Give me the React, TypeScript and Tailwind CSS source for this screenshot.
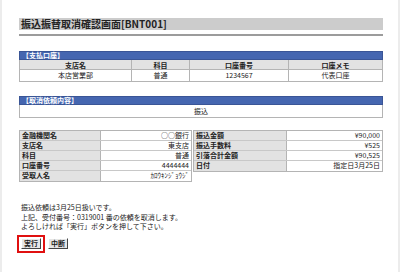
const jp = { fontFamily: '"Noto Sans CJK JP", "Noto Sans", sans-serif' };

const payAccount = { branch: "本店営業部", kind: "普通", number: "1234567", memo: "代表口座" };

const leftRows: [string, string][] = [
  ["金融機関名", "○○銀行"],
  ["支店名", "東支店"],
  ["科目", "普通"],
  ["口座番号", "4444444"],
  ["受取人名", "ｶﾛｳｷﾝｼﾞｮｳｼﾞ"],
];

const rightRows: [string, string][] = [
  ["振込金額", "¥90,000"],
  ["振込手数料", "¥525"],
  ["引落合計金額", "¥90,525"],
  ["日付", "指定日3月25日"],
];

function SectionBar({ title }: { title: string }) {
  return (
    <div className="h-[9px] bg-[#4566b0] border border-[#3a5596] text-white font-bold text-[7px] leading-[7px] pl-[2px]">
      {title}
    </div>
  );
}

function KeyValueTable({ rows, labelW }: { rows: [string, string][]; labelW: string }) {
  return (
    <div className="flex flex-col border border-[#b4b4b4] bg-white">
      {rows.map(([k, v]) => (
        <div key={k} className="flex h-[10px] border-b border-[#c8c8c8] last:border-b-0 text-[7px] leading-[9px]">
          <div className={`${labelW} bg-[#e2e2e2] border-r border-[#b4b4b4] font-bold pl-[2px]`}>{k}</div>
          <div className="flex-1 text-right pr-[2px]">{v}</div>
        </div>
      ))}
    </div>
  );
}

function OldButton({ label }: { label: string }) {
  return (
    <button className="flex items-center justify-center w-[20px] h-[11px] p-0 bg-[#e6e6e6] border border-t-white border-l-white border-r-[#444] border-b-[#444] text-[7px] leading-none font-bold">
      {label}
    </button>
  );
}

export default function App() {
  return (
    <div className="w-[400px] h-[272px] bg-white border-x-2 border-[#ececec] text-[#222]" style={jp}>
      <div className="pt-[18px] pl-[17px] w-[381px]">
        <div className="h-[12px] bg-[#cccccc] font-bold text-[10px] leading-[12px] pl-[2px]">振込振替取消確認画面[BNT001]</div>
        <div className="mt-[4px] h-[2px] bg-[#9c9c9c]" />

        <div className="mt-[15px]">
          <SectionBar title="【支払口座】" />
          <div className="grid grid-cols-[112px_58px_99px_1fr] border border-t-0 border-[#b4b4b4] text-[7px]">
            {["支店名", "科目", "口座番号", "口座メモ"].map((h, i) => (
              <div key={h} className={`h-[10px] leading-[10px] bg-[#e2e2e2] font-bold text-center border-b border-[#b4b4b4] ${i < 3 ? "border-r" : ""}`}>{h}</div>
            ))}
            {[payAccount.branch, payAccount.kind, payAccount.number, payAccount.memo].map((v, i) => (
              <div key={i} className={`h-[11px] leading-[11px] text-center border-[#b4b4b4] ${i < 3 ? "border-r" : ""}`}>{v}</div>
            ))}
          </div>
        </div>

        <div className="mt-[14px]">
          <SectionBar title="【取消依頼内容】" />
          <div className="h-[13px] border border-t-0 border-[#b4b4b4] text-center text-[7px] leading-[12px]">振込</div>
        </div>

        <div className="mt-[12px] flex gap-px items-start">
          <div className="w-[173px]">
            <KeyValueTable rows={leftRows} labelW="w-[81px]" />
          </div>
          <div className="flex-1">
            <KeyValueTable rows={rightRows} labelW="w-[93px]" />
          </div>
        </div>

        <div className="mt-[21px] pl-[2px] text-[7px] leading-[9.5px]">
          <p>振込依頼は3月25日扱いです。</p>
          <p>上記、受付番号：0319001 番の依頼を取消します。</p>
          <p>よろしければ「実行」ボタンを押して下さい。</p>
        </div>

        <div className="mt-[3px] -ml-[2px] flex items-center gap-[3px]">
          <div className="flex items-center justify-center w-[28px] h-[18px] border-2 border-[#e01010]">
            <OldButton label="実行" />
          </div>
          <OldButton label="中断" />
        </div>
      </div>
    </div>
  );
}
